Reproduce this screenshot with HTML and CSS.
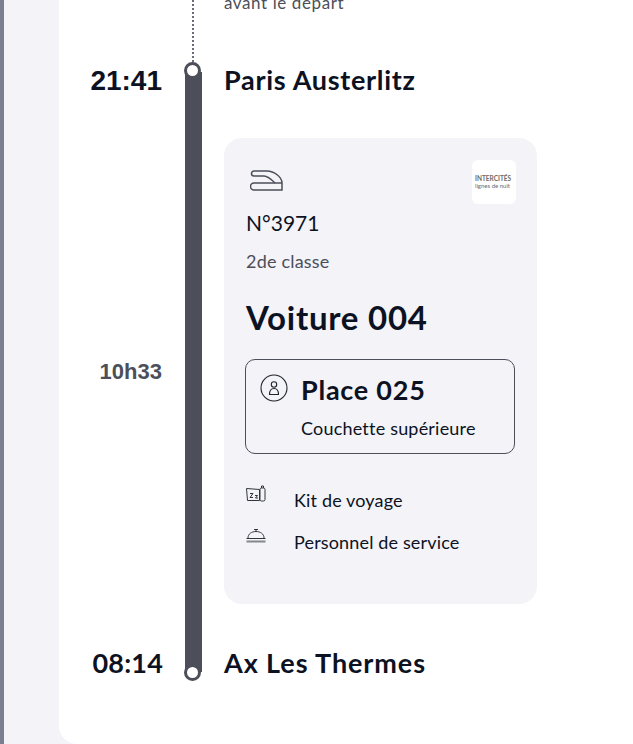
FILE: index.html
```html
<!DOCTYPE HTML>
<html>
<head>
<meta charset="utf-8" />
<title>Voyage</title>
<link rel="stylesheet" href="styles.css">
</head>
<body>
	<div class="side"></div>
	<div class="panel">
		<div class="rail-col">
			<div class="dots"></div>
			<div class="bar"></div>
			<span class="stop stop-a"></span>
			<span class="stop stop-b"></span>
		</div>
		<div class="note">avant le départ</div>

		<div class="time t1">21:41</div>
		<div class="city c1">Paris Austerlitz</div>

		<div class="time-len">10h33</div>
		<div class="card">
			<div class="card-top">
				<svg class="train" width="34" height="24" viewBox="0 0 34 24" fill="none" stroke="#4c4f59" stroke-width="1.5">
					<path d="M4 2H17C24 2 32 8 32 14V21H4a3.500 3.500 0 0 1 0-7H32"/>
					<path d="M4 2a2.500 2.500 0 0 0 0 5H14C18 7 22 11 25 14"/>
				</svg>
				<div class="logo">
					<b>INTERCITÉS</b>
					<span>lignes de nuit</span>
				</div>
			</div>
			<div class="num">N°3971</div>
			<div class="cls">2de classe</div>
			<div class="car">Voiture 004</div>
			<div class="seat">
				<svg class="seat-ico" width="28" height="28" viewBox="0 0 28 28" fill="none" stroke="#23252d" stroke-width="1.100">
					<circle cx="14" cy="14" r="13"/>
					<circle cx="14" cy="10.500" r="2.700"/>
					<path d="M9.500 20.500c0-4 2-6 4.500-6s4.500 2 4.500 6z"/>
				</svg>
				<div>
					<div class="seat-no">Place 025</div>
					<div class="seat-type">Couchette supérieure</div>
				</div>
			</div>
			<ul class="extras">
				<li>
					<svg width="20" height="18" viewBox="0 0 20 18" fill="none" stroke="#33353d" stroke-width="1">
						<path d="M.5 3.500l13 1v11h-12z"/>
						<rect x="14" y="3" width="5" height="13" rx="1.500"/>
						<path d="M15.500 3V1h2v2"/>
						<path d="M4 8.500h3l-3 4h3M9 10.500h2.500l-2 2.500h2.500"/>
					</svg>
					<span>Kit de voyage</span>
				</li>
				<li>
					<svg width="20" height="18" viewBox="0 0 20 18" fill="none" stroke="#33353d" stroke-width="1">
						<path d="M8 2.500h4M10 2.500v2M2 11c0-4 3.500-6.500 8-6.500s8 2.500 8 6.500"/>
						<path d="M.5 11.500h19"/>
						<path d="M.5 14.500h19" stroke="#85878f" stroke-width="2"/>
					</svg>
					<span>Personnel de service</span>
				</li>
			</ul>
		</div>

		<div class="time t2">08:14</div>
		<div class="city c2">Ax Les Thermes</div>
	</div>
</body>
</html>
```

FILE: styles.css
```css
html,body{margin:0;height:100%;}
body{
	width:633px;
	height:744px;
	overflow:hidden;
	display:flex;
	background:#f3f3f8;
	font-family:"Lato","Liberation Sans",sans-serif;
	color:#0c1222;
}
.side{width:4px;background:#7b7e8f;margin-right:55px;flex:none;}
.panel{
	flex:1;
	background:#fff;
	border-bottom-left-radius:18px;
	display:grid;
	grid-template-columns:103px 17px 1fr;
	grid-template-rows:62px 76px 466px 140px;
}
.rail-col{
	grid-column:2;
	grid-row:1 / 5;
	position:relative;
	left:23px;
}
.dots{
	position:absolute;
	left:7px;
	top:0;
	height:62px;
	border-left:2px dotted #6b6e78;
}
.bar{
	position:absolute;
	left:0;
	top:72px;
	width:17px;
	height:600px;
	background:#4c4f59;
}
.stop{
	position:absolute;
	left:-1px;
	width:11px;
	height:11px;
	border:3px solid #4c4f59;
	border-radius:50%;
	background:#fff;
}
.stop-a{top:62px;}
.stop-b{top:664px;}
.note{
	grid-column:3;
	grid-row:1;
	margin:-7px 0 0 45px;
	font-size:17px;
	letter-spacing:.6px;
	line-height:20px;
	color:#4c4f59;
}
.time{
	grid-column:1;
	text-align:right;
	font-size:28px;
	font-weight:700;
	line-height:38px;
}
.t1{grid-row:2;font-family:"Liberation Sans",sans-serif;}
.t2{grid-row:4;margin:40px -1px 0 0;font-size:27px;letter-spacing:.2px;}
.city{
	grid-column:3;
	margin-left:45px;
	font-size:27px;
	font-weight:700;
	letter-spacing:.7px;
	line-height:38px;
}
.c1{grid-row:2;margin-top:-1px;}
.c2{grid-row:4;margin-top:40px;letter-spacing:.9px;}
.time-len{
	grid-column:1;
	grid-row:3;
	align-self:center;
	margin-top:2px;
	text-align:right;
	font-family:"Liberation Sans",sans-serif;
	font-size:22px;
	font-weight:700;
	color:#4c4f59;
}
.card{
	grid-column:3;
	grid-row:3;
	width:313px;
	height:466px;
	box-sizing:border-box;
	margin-left:45px;
	padding:22px 21px 0 21px;
	background:#f3f3f8;
	border-radius:18px;
}
.card-top{display:flex;justify-content:space-between;align-items:flex-start;height:44px;}
.train{margin:9px 0 0 5px;}
.logo{
	width:44px;
	height:44px;
	background:#fff;
	border-radius:6px;
	display:flex;
	flex-direction:column;
	justify-content:center;
	padding-left:3px;
	box-sizing:border-box;
	color:#6d6a66;
	line-height:7px;
	white-space:nowrap;
}
.logo b{font-size:6.500px;}
.logo span{font-size:6px;}
.num{font-size:21px;line-height:30px;margin:4px 0 0 1px;}
.cls{font-size:18px;letter-spacing:.2px;line-height:24px;margin-top:11px;margin-left:1px;color:#4c4f59;}
.car{font-size:33px;font-weight:700;letter-spacing:.75px;line-height:44px;margin:22px 0 0 1px;}
.seat{
	display:flex;
	gap:13px;
	align-items:flex-start;
	margin:20px 1px 0 0;
	height:95px;
	box-sizing:border-box;
	border:1px solid #4c4f59;
	border-radius:10px;
	padding:14px 14px 0 14px;
}
.seat-no{font-size:27px;font-weight:700;letter-spacing:.75px;line-height:34px;margin-top:-1px;}
.seat-type{font-size:18px;letter-spacing:.2px;line-height:24px;margin-top:9px;}
.extras{list-style:none;margin:29px 0 0 1px;padding:0;}
.extras li{display:flex;align-items:flex-start;gap:28px;height:42px;font-size:18px;letter-spacing:.15px;line-height:24px;}
.extras svg{margin-top:2px;}
.extras span{margin-top:5px;}
```
